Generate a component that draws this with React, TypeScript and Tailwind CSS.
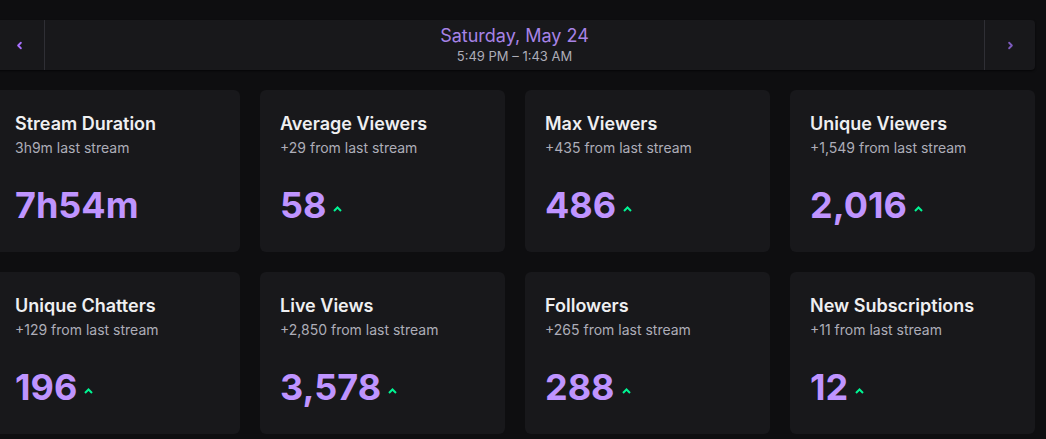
import { ChevronLeft, ChevronRight } from 'lucide-react'

type Stat = {
  title: string
  subtitle: string
  value: string
  up?: boolean
}

const stats: Stat[] = [
  { title: 'Stream Duration', subtitle: '3h9m last stream', value: '7h54m' },
  { title: 'Average Viewers', subtitle: '+29 from last stream', value: '58', up: true },
  { title: 'Max Viewers', subtitle: '+435 from last stream', value: '486', up: true },
  { title: 'Unique Viewers', subtitle: '+1,549 from last stream', value: '2,016', up: true },
  { title: 'Unique Chatters', subtitle: '+129 from last stream', value: '196', up: true },
  { title: 'Live Views', subtitle: '+2,850 from last stream', value: '3,578', up: true },
  { title: 'Followers', subtitle: '+265 from last stream', value: '288', up: true },
  { title: 'New Subscriptions', subtitle: '+11 from last stream', value: '12', up: true },
]

function UpArrow() {
  return (
    <svg width="9" height="6" viewBox="0 0 9 6" className="mb-[13px] ml-[7px]">
      <path d="M1 5 L4.5 1.5 L8 5" fill="none" stroke="#00f593" strokeWidth="2" />
    </svg>
  )
}

function StatCard({ stat }: { stat: Stat }) {
  return (
    <div className="h-[162px] rounded-md bg-[#18181b] px-5 pt-5">
      <h3 className="text-lg leading-7 font-semibold text-[#efeff1]">{stat.title}</h3>
      <p className="text-sm leading-5 text-[#adadb8]">{stat.subtitle}</p>
      <div className="mt-[27px] flex items-end">
        <span className="text-4xl leading-10 font-bold text-[#bf94ff]">{stat.value}</span>
        {stat.up && <UpArrow />}
      </div>
    </div>
  )
}

export default function App() {
  return (
    <div
      className="min-h-screen overflow-hidden bg-[#0e0e10]"
      style={{ fontFamily: 'Inter, "Noto Sans", sans-serif' }}
    >
      <div className="-ml-[5px] flex w-[1040px] flex-col gap-5 pt-5">
        {/* Date selector */}
        <div className="flex h-[50px] items-stretch rounded-sm bg-[#18181b] shadow-[0_1px_2px_rgba(0,0,0,0.6)]">
          <button className="flex w-[50px] items-center justify-center border-r border-[#2f2f35] text-[#a970ff]">
            <ChevronLeft size={11} strokeWidth={4} />
          </button>
          <div className="flex flex-1 flex-col items-center justify-center pb-[3px]">
            <span className="text-lg leading-6 text-[#a783e6]">Saturday, May 24</span>
            <span className="text-[13px] leading-4 text-[#adadb8]">5:49 PM – 1:43 AM</span>
          </div>
          <button className="flex w-[51px] items-center justify-center border-l border-[#2f2f35] text-[#7d5bbe]">
            <ChevronRight size={11} strokeWidth={4} />
          </button>
        </div>

        {/* Stats */}
        <div className="grid grid-cols-4 gap-5">
          {stats.map((s) => (
            <StatCard key={s.title} stat={s} />
          ))}
        </div>
      </div>
    </div>
  )
}
